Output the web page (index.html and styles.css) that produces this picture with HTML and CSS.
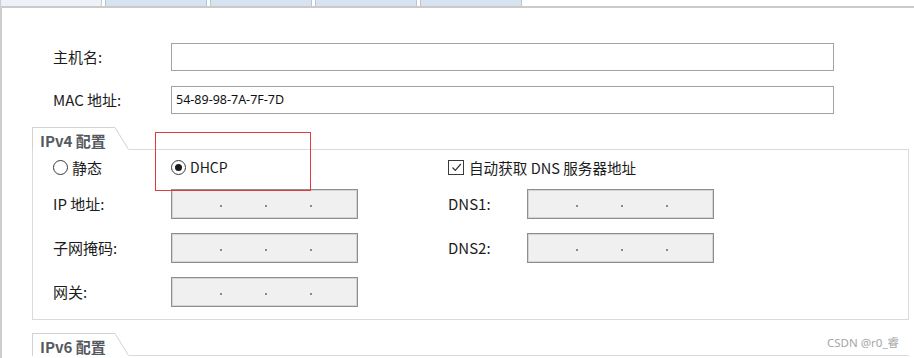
FILE: index.html
```html
<!DOCTYPE html>
<html lang="zh-CN">
<head>
<meta charset="utf-8">
<title>网络配置</title>
<link rel="stylesheet" href="styles.css">
</head>
<body>
<div class="tabbar">
  <div class="tab tab-active"></div>
  <div class="tab"></div>
  <div class="tab"></div>
  <div class="tab"></div>
  <div class="tab"></div>
</div>
<div class="window">
  <div class="form-top">
    <span class="label">主机名:</span>
    <div class="field"></div>
    <span class="label">MAC 地址:</span>
    <div class="field">54-89-98-7A-7F-7D</div>
  </div>

  <section class="group">
    <div class="ghead">
      <div class="gtitle">IPv4 配置</div>
      <svg class="slant" width="14" height="23" viewBox="0 0 14 23"><path d="M0 0.5 L13.5 22.5" stroke="#d2d2d2" stroke-width="1" fill="none"/></svg>
      <div class="gfill"></div>
    </div>
    <div class="gbody">
      <div class="choice-row">
        <span class="opt"><span class="radio"></span>静态</span>
        <span class="opt opt-latin"><span class="radio radio-on"></span>DHCP</span>
        <span class="opt opt-mixed"><span class="check"><svg width="13" height="13" viewBox="0 0 13 13"><path d="M2.5 6.5 L5.3 9.3 L10.8 3" stroke="#333" stroke-width="1.2" fill="none"/></svg></span>自动获取 DNS 服务器地址</span>
      </div>
      <div class="ipgrid">
        <span class="label">IP 地址:</span>
        <div class="ip"><i></i><i></i><i></i></div>
        <span></span>
        <span class="label">DNS1:</span>
        <div class="ip"><i></i><i></i><i></i></div>

        <span class="label">子网掩码:</span>
        <div class="ip"><i></i><i></i><i></i></div>
        <span></span>
        <span class="label">DNS2:</span>
        <div class="ip"><i></i><i></i><i></i></div>

        <span class="label">网关:</span>
        <div class="ip"><i></i><i></i><i></i></div>
      </div>
    </div>
    <div class="annot"></div>
  </section>

  <section class="group group-v6">
    <div class="ghead">
      <div class="gtitle">IPv6 配置</div>
      <svg class="slant" width="14" height="23" viewBox="0 0 14 23"><path d="M0 0.5 L13.5 22.5" stroke="#d2d2d2" stroke-width="1" fill="none"/></svg>
      <div class="gfill"></div>
    </div>
  </section>
</div>
<div class="watermark">CSDN @r0_睿</div>
</body>
</html>
```

FILE: styles.css
```css
* { box-sizing: border-box; }
html, body { margin: 0; padding: 0; background: #fff; }
body {
  width: 914px;
  height: 358px;
  overflow: hidden;
  position: relative;
  font-family: "Noto Sans CJK SC", "Noto Sans", sans-serif;
  font-size: 15px;
  color: #1c1c1c;
}

.tabbar {
  display: flex;
  gap: 3px;
  height: 6px;
}
.tab {
  width: 102px;
  height: 6px;
  background: #d7e3f1;
  border: 1px solid #b9c5d5;
  border-top: none;
  border-bottom: none;
}
.tab-active {
  background: #edf2f9;
  border-color: #c8ced6;
}

.window {
  border-top: 2px solid #cacaca;
  border-left: 2px solid #cdcdcd;
  height: 352px;
}

.form-top {
  display: grid;
  grid-template-columns: 118px 663px;
  grid-auto-rows: 28px;
  row-gap: 15px;
  align-items: center;
  padding: 35px 0 0 51px;
}
.label {
  font-size: 15px;
  line-height: 20px;
  white-space: nowrap;
}
.field {
  height: 28px;
  border: 1px solid #a3a3a3;
  background: #fff;
  font-family: "Noto Sans", "Noto Sans CJK SC", sans-serif;
  font-size: 12.5px;
  line-height: 26px;
  padding-left: 4px;
  color: #111;
}

.group {
  position: relative;
  margin: 13px 0 0 30px;
  width: 877px;
}
.ghead {
  display: flex;
  height: 23px;
}
.gtitle {
  width: 83px;
  height: 23px;
  border-top: 1px solid #d2d2d2;
  border-left: 1px solid #d2d2d2;
  padding: 3px 0 0 7px;
  font-size: 15px;
  line-height: 19px;
  font-weight: bold;
  color: #555a60;
  white-space: nowrap;
}
.slant { display: block; flex: none; }
.gfill {
  flex: 1;
  height: 23px;
  border-bottom: 1px solid #dadada;
}
.gbody {
  border: 1px solid #dadada;
  border-top: none;
  padding: 2px 0 12px 20px;
}

.choice-row {
  display: grid;
  grid-template-columns: 118px 277px 1fr;
  height: 30px;
  align-items: center;
  margin-bottom: 7px;
}
.opt {
  display: flex;
  align-items: center;
  white-space: nowrap;
  font-size: 15px;
}
.opt-latin { font-size: 14px; }
.opt-mixed { font-size: 14.6px; }
.radio {
  width: 15px;
  height: 15px;
  border: 1px solid #3a3a3a;
  border-radius: 50%;
  margin-right: 4px;
  display: flex;
  align-items: center;
  justify-content: center;
  background: #fff;
}
.radio-on::after {
  content: "";
  width: 7px;
  height: 7px;
  border-radius: 50%;
  background: #1a1a1a;
}
.check {
  width: 16px;
  height: 15px;
  border: 1px solid #3a3a3a;
  margin-right: 5px;
  display: flex;
  align-items: center;
  justify-content: center;
  background: #fff;
}
.check svg { display: block; }

.ipgrid {
  display: grid;
  grid-template-columns: 118px 187px 90px 79px 187px;
  grid-auto-rows: 30px;
  row-gap: 14px;
  align-items: center;
}
.ip {
  height: 30px;
  background: #f0f0f0;
  border: 1px solid #8e8e8e;
  box-shadow: inset 0 0 0 1px #d4d4d4;
  display: flex;
  align-items: center;
  padding: 3px 0 0 48px;
  gap: 43px;
}
.ip i {
  display: block;
  width: 2px;
  height: 2px;
  background: #8a8a8a;
}

.annot {
  position: absolute;
  left: 123px;
  top: 5px;
  width: 156px;
  height: 59px;
  border: 1px solid #e5393d;
}

.watermark {
  position: absolute;
  right: 15px;
  top: 335px;
  font-family: "Noto Sans", "Noto Sans CJK SC", sans-serif;
  font-size: 11.5px;
  line-height: 16px;
  color: #a6a6a6;
}
```
